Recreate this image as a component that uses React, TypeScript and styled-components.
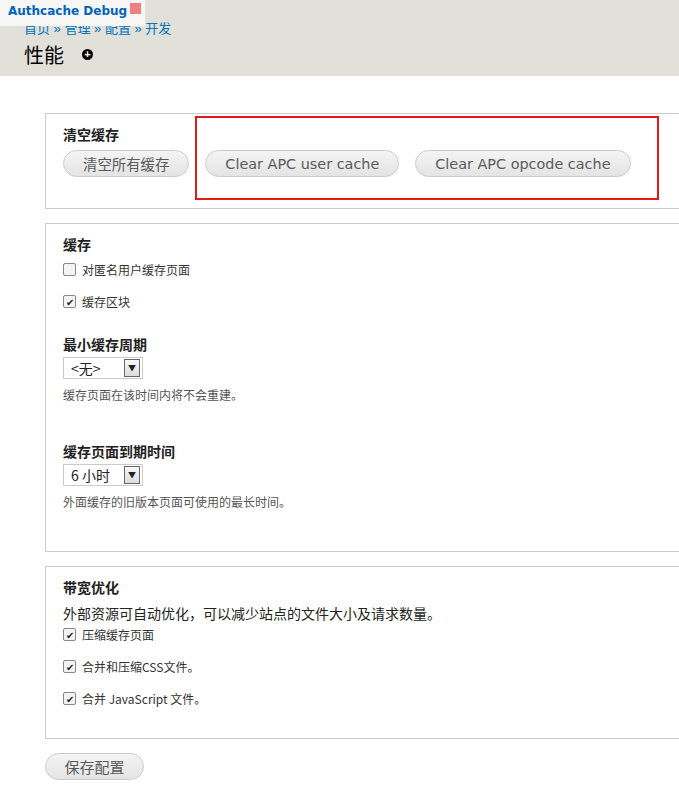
import React from "react";
import styled, { createGlobalStyle } from "styled-components";

const G = createGlobalStyle`
  body { margin: 0; background: #fff; font-family: "Liberation Sans", "Noto Sans CJK SC", sans-serif; color: #333; }
`;
const Header = styled.div`
  background: #e1e1d9; height: 76px; position: relative; padding-left: 24px; box-sizing: border-box;
`;
const Debug = styled.div`
  position: absolute; left: 0; top: 0; background: #f6f6f4; height: 26px; width: 145px;
  font: bold 12px "DejaVu Sans", sans-serif; color: #0063c0; padding: 4px 0 0 8px; box-sizing: border-box;
`;
const Red = styled.span`position: absolute; left: 130px; top: 3px; width: 11px; height: 11px; background: #f08080;`;
const Crumb = styled.div`padding-top: 18px; font-size: 13px; color: #0072b9; height: 18px; overflow: hidden;`;
const Title = styled.h1`
  margin: 4px 0 0; font: normal 20px "Noto Sans CJK SC", sans-serif; color: #000; display: flex; align-items: center; gap: 18px;
`;
const Plus = styled.span`
  width: 11px; height: 11px; border-radius: 50%; background: #000; color: #fff; font: bold 11px/11px sans-serif; text-align: center;
`;
const Main = styled.div`padding: 37px 0 0 45px; display: flex; flex-direction: column; gap: 14px;`;
const Fieldset = styled.div<{ h: number }>`
  border: 1px solid #ccc; border-right: none; height: ${p => p.h}px; box-sizing: border-box; padding: 10px 0 0 17px; position: relative;
`;
const Legend = styled.div`font: bold 14px "Noto Sans CJK SC", sans-serif; color: #222; margin-bottom: 6px;`;
const Buttons = styled.div`display: flex; gap: 16px;`;
const Btn = styled.button`
  height: 27px; border: 1px solid #ccc; border-radius: 14px; background: linear-gradient(#f4f4f4, #e4e4e4);
  font: 14.4px "DejaVu Sans", "Noto Sans CJK SC", sans-serif; color: #5a5a5a; padding: 0 19px;
`;
const Highlight = styled.div`position: absolute; left: 149px; top: 2px; width: 460px; height: 80px; border: 2px solid #e21a1a;`;
const Check = styled.label`display: flex; align-items: center; gap: 6px; font: 12px "Noto Sans CJK SC", sans-serif; color: #333; height: 18px; margin: 6px 0 14px;`;
const Box = styled.span`
  width: 11px; height: 11px; border: 1px solid #888; border-radius: 2px; background: #f4f4f4; font-size: 10px; line-height: 11px; text-align: center; color: #222;
`;
const Label = styled.div<{ top: number }>`font: bold 14px "Noto Sans CJK SC", sans-serif; color: #222; margin-top: ${p => p.top}px;`;
const Select = styled.div`
  width: 80px; height: 22px; border: 1px solid #ccc; display: flex; align-items: center; justify-content: space-between; padding: 0 2px 0 7px; box-sizing: border-box;
  font: 14px "Noto Sans CJK SC", sans-serif; color: #222; margin-top: 3px;
`;
const Arrow = styled.span`width: 14px; height: 16px; border: 1px solid #666; background: linear-gradient(#f8f8f8,#ddd); font-size: 8px; line-height: 16px; text-align: center;`;
const Desc = styled.div`font: 12px "Noto Sans CJK SC", sans-serif; color: #555; margin-top: 7px;`;
const Para = styled.div`font: 14px "Noto Sans CJK SC", sans-serif; color: #222; margin-top: 4px;`;
const Checks = styled.div`margin-top: -4px;`;
const Save = styled(Btn)`width: 99px; padding: 0; font-size: 15px; margin-bottom: 10px;`;

export default function App() {
  const cb = (t: string, on?: boolean) => <Check><Box>{on ? "✔" : ""}</Box>{t}</Check>;
  return (
    <>
      <G />
      <Header>
        <Crumb>首页 » 管理 » 配置 » 开发</Crumb>
        <Title>性能<Plus>+</Plus></Title>
        <Debug>Authcache Debug<Red /></Debug>
      </Header>
      <Main>
        <Fieldset h={96}>
          <Legend>清空缓存</Legend>
          <Buttons>
            <Btn>清空所有缓存</Btn>
            <Btn>Clear APC user cache</Btn>
            <Btn>Clear APC opcode cache</Btn>
          </Buttons>
          <Highlight />
        </Fieldset>
        <Fieldset h={329}>
          <Legend>缓存</Legend>
          {cb("对匿名用户缓存页面")}
          {cb("缓存区块", true)}
          <Label top={24}>最小缓存周期</Label>
          <Select>&lt;无&gt;<Arrow>▼</Arrow></Select>
          <Desc>缓存页面在该时间内将不会重建。</Desc>
          <Label top={38}>缓存页面到期时间</Label>
          <Select>6 小时<Arrow>▼</Arrow></Select>
          <Desc>外面缓存的旧版本页面可使用的最长时间。</Desc>
        </Fieldset>
        <Fieldset h={173}>
          <Legend>带宽优化</Legend>
          <Para>外部资源可自动优化，可以减少站点的文件大小及请求数量。</Para>
          <Checks>
            {cb("压缩缓存页面", true)}
            {cb("合并和压缩CSS文件。", true)}
            {cb("合并 JavaScript 文件。", true)}
          </Checks>
        </Fieldset>
        <div><Save>保存配置</Save></div>
      </Main>
    </>
  );
}
